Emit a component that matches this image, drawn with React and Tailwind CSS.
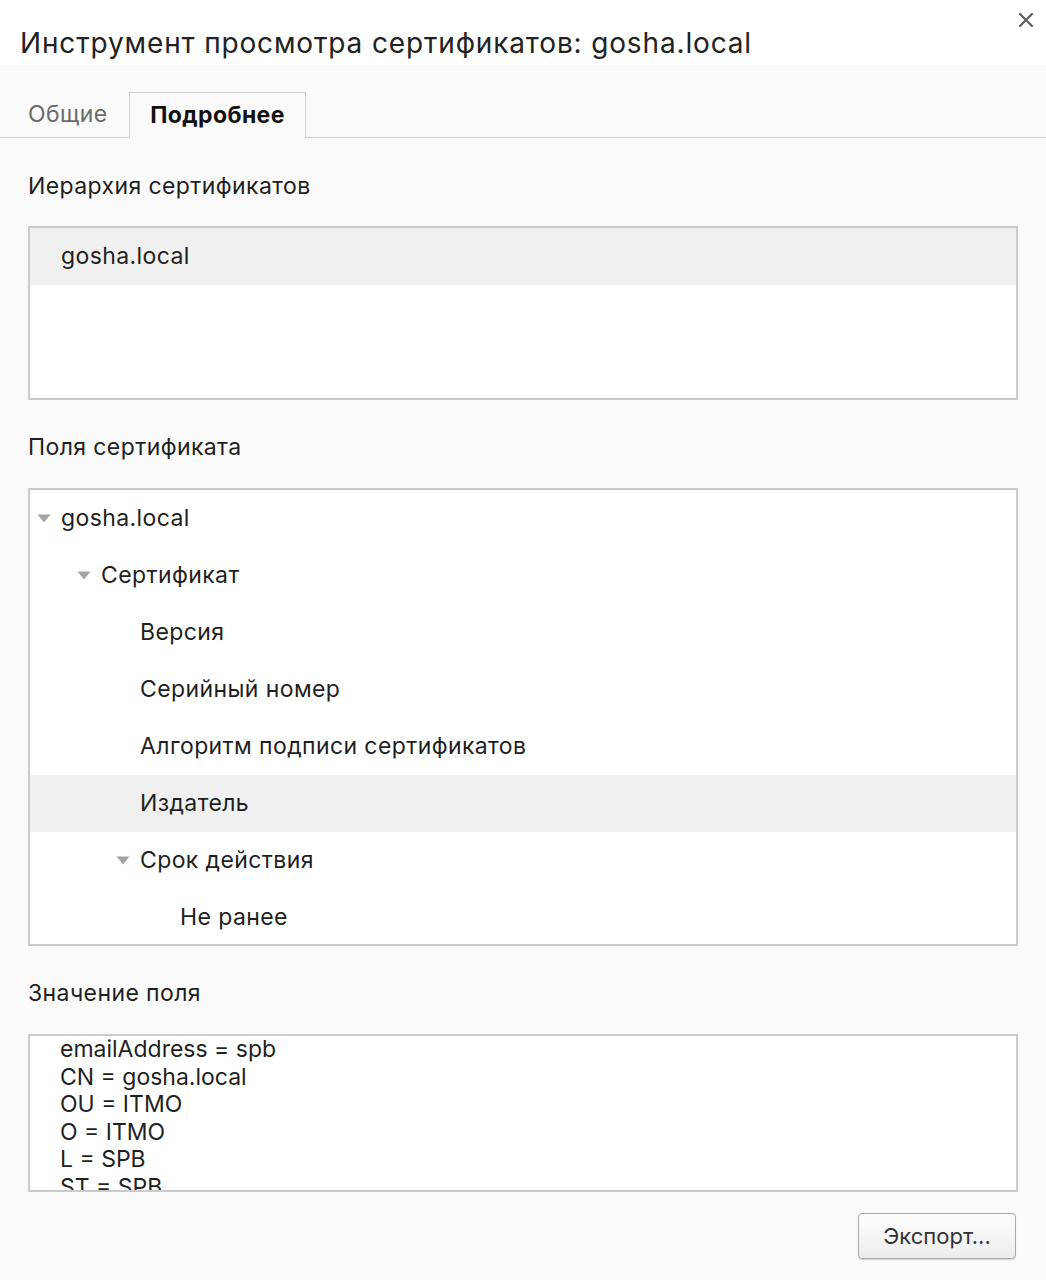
import React from "react";

const fields = [
  { label: "gosha.local", level: 0, open: true },
  { label: "Сертификат", level: 1, open: true },
  { label: "Версия", level: 2 },
  { label: "Серийный номер", level: 2 },
  { label: "Алгоритм подписи сертификатов", level: 2 },
  { label: "Издатель", level: 2, selected: true },
  { label: "Срок действия", level: 2, open: true },
  { label: "Не ранее", level: 3 },
];

const values = [
  "emailAddress = spb",
  "CN = gosha.local",
  "OU = ITMO",
  "O = ITMO",
  "L = SPB",
  "ST = SPB",
];

const indent = ["pl-[7px]", "pl-[47px]", "pl-[86px]", "pl-[126px]"];

const Triangle = () => (
  <svg width="14" height="9" viewBox="0 0 14 9" className="shrink-0">
    <path d="M0.5 0.5 H13.5 L7 8.5 Z" fill="#a3a3a3" />
  </svg>
);

const TreeRow = ({ row }) => (
  <div
    className={`flex h-[57px] shrink-0 items-center ${indent[row.level]} ${
      row.selected ? "bg-[#f0f0f0]" : ""
    }`}
  >
    <div className="flex w-[24px] items-center">{row.open && <Triangle />}</div>
    <span>{row.label}</span>
  </div>
);

export default function App() {
  return (
    <div className="h-[1280px] w-[1046px] overflow-hidden bg-[#fafafa] font-['Inter',sans-serif] text-[23px] tracking-[0.4px] text-[#1f1f1f]">
      <div className="relative h-[65px] bg-white">
        <h1 className="pl-[20px] pt-[27px] text-[28px] leading-[32px] font-normal tracking-[0.85px] text-[#222]">
          Инструмент просмотра сертификатов: gosha.local
        </h1>
        <svg
          className="absolute right-[12px] top-[12px]"
          width="16"
          height="16"
          viewBox="0 0 16 16"
        >
          <path d="M2 2 L14 14 M14 2 L2 14" stroke="#5f5f5f" strokeWidth="2.2" strokeLinecap="round" />
        </svg>
      </div>

      <div className="mt-[27px] flex h-[46px] items-stretch border-b border-[#cfcfcf]">
        <div className="flex w-[129px] items-center pl-[28px] text-[#6b6b6b]">Общие</div>
        <div className="-mb-px flex w-[177px] items-center justify-center border border-b-0 border-[#cfcfcf] bg-[#fafafa] font-bold text-[#111]">
          Подробнее
        </div>
      </div>

      <div className="px-[28px]">
        <div className="mt-[34px] leading-[28px]">Иерархия сертификатов</div>
        <div className="mt-[26px] h-[174px] border-2 border-[#cbcbcb] bg-white">
          <div className="flex h-[57px] items-center bg-[#f0f0f0] pl-[31px]">gosha.local</div>
        </div>

        <div className="mt-[33px] leading-[28px]">Поля сертификата</div>
        <div className="mt-[27px] flex h-[458px] flex-col overflow-hidden border-2 border-[#cbcbcb] bg-white">
          {fields.map((row) => (
            <TreeRow key={row.label} row={row} />
          ))}
        </div>

        <div className="mt-[33px] leading-[28px]">Значение поля</div>
        <div className="mt-[27px] h-[158px] overflow-hidden border-2 border-[#cbcbcb] bg-white pl-[30px] leading-[27.5px] tracking-normal">
          {values.map((v) => (
            <div key={v}>{v}</div>
          ))}
        </div>

        <div className="mt-[21px] flex justify-end pr-[2px]">
          <button className="h-[46px] w-[158px] rounded-[4px] border border-[#a9a9a9] bg-gradient-to-b from-white to-[#ececec] text-[22px] tracking-normal text-[#333] shadow-[0_1px_1px_rgba(0,0,0,0.15)]">
            Экспорт...
          </button>
        </div>
      </div>
    </div>
  );
}
